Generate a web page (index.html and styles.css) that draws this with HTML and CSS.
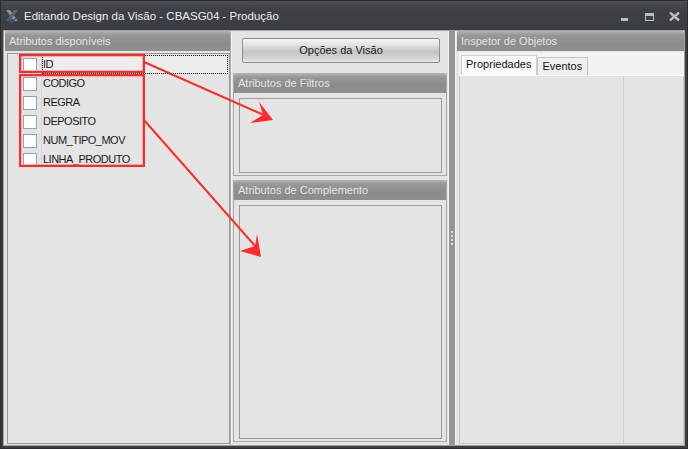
FILE: index.html
```html
<!DOCTYPE html>
<html lang="pt">
  <head>
    <meta charset="UTF-8" />
    <title>Editando Design da Visão</title>
    <link rel="stylesheet" href="styles.css">
  </head>
  <body>
    <div class="window">
      <div class="titlebar">
        <svg class="logo" width="16" height="16" viewBox="0 0 16 16">
          <path d="M2 2 L6 2 L14 13 L10 13 Z" fill="#8c939b"/>
          <path d="M14 2 L10 2 L2 13 L6 13 Z" fill="#5d6670"/>
          <path d="M3 10 L8 15 L13 10 L11 10 L8 13 L5 10 Z" fill="#3f5a78"/>
        </svg>
        <span class="title">Editando Design da Visão - CBASG04 - Produção</span>
        <div class="controls">
          <span class="ctl-min"></span>
          <span class="ctl-max"></span>
          <svg class="ctl-close" width="11" height="9" viewBox="0 0 11 9">
            <path d="M1 0.5 L10 8.5 M10 0.5 L1 8.5" stroke="#b9bec5" stroke-width="2.4"/>
          </svg>
        </div>
      </div>

      <div class="main">
        <div class="left">
          <div class="head">Atributos disponíveis</div>
          <div class="list">
            <div class="row active"><span class="chk-col"><span class="chk"></span></span><span class="lbl">ID</span></div>
            <div class="row"><span class="chk-col"><span class="chk"></span></span><span class="lbl">CODIGO</span></div>
            <div class="row"><span class="chk-col"><span class="chk"></span></span><span class="lbl">REGRA</span></div>
            <div class="row"><span class="chk-col"><span class="chk"></span></span><span class="lbl">DEPOSITO</span></div>
            <div class="row"><span class="chk-col"><span class="chk"></span></span><span class="lbl">NUM_TIPO_MOV</span></div>
            <div class="row"><span class="chk-col"><span class="chk"></span></span><span class="lbl">LINHA_PRODUTO</span></div>
          </div>
        </div>

        <div class="mid">
          <div class="btn">Opções da Visão</div>
          <div class="sec">
            <div class="head">Atributos de Filtros</div>
            <div class="sec-box short"></div>
          </div>
          <div class="sec grow">
            <div class="head">Atributos de Complemento</div>
            <div class="sec-box"></div>
          </div>
        </div>

        <div class="splitter">
          <span class="dot"></span><span class="dot"></span><span class="dot"></span><span class="dot"></span>
        </div>

        <div class="right">
          <div class="head">Inspetor de Objetos</div>
          <div class="tabs">
            <span class="tab on">Propriedades</span>
            <span class="tab">Eventos</span>
          </div>
          <div class="grid">
            <div class="grid-name"></div>
            <div class="grid-val"></div>
          </div>
        </div>
      </div>

      <!-- annotations drawn over the screenshot -->
      <div class="mark mark-1"></div>
      <div class="mark mark-2"></div>
      <svg class="arrows" width="688" height="449" viewBox="0 0 688 449">
        <path d="M144 62 L266 116" stroke="#ff2a2a" stroke-width="2" fill="none"/>
        <path d="M273 120 L259 102 L263 115 L250 123 Z" fill="#ff2a2a"/>
        <path d="M144 120 L256 247" stroke="#ff2a2a" stroke-width="2" fill="none"/>
        <path d="M261 257 L257 234 L255 246 L240 251 Z" fill="#ff2a2a"/>
      </svg>
    </div>
  </body>
</html>
```

FILE: styles.css
```css
* {
  box-sizing: border-box;
}
body {
  margin: 0;
  font-family: "Liberation Sans", Arial, sans-serif;
  font-size: 11px;
  background: #3b3e42;
}
.window {
  position: relative;
  width: 688px;
  height: 449px;
  border: 1px solid #2a2c2f;
  background: #3b3e42;
  display: flex;
  flex-direction: column;
}
.titlebar {
  height: 29px;
  flex: none;
  display: flex;
  align-items: center;
  background: linear-gradient(#4a4d52, #3e4145 30%, #3a3d41);
}
.logo {
  margin: 0 4px 0 3px;
}
.title {
  color: #eeeeee;
  font-size: 11.5px;
}
.controls {
  margin-left: auto;
  display: flex;
  align-items: center;
  margin-right: 7px;
  margin-top: 2px;
}
.ctl-min {
  width: 7px;
  height: 3px;
  margin-top: 6px;
  background: #b9bec5;
}
.ctl-max {
  width: 9px;
  height: 8px;
  margin-left: 17px;
  border: 1px solid #b9bec5;
  border-top-width: 3px;
}
.ctl-close {
  margin-left: 15px;
}
.main {
  flex: 1;
  display: flex;
  margin: 0 2px 2px 2px;
  background: #e4e4e4;
  border: 1px solid #a2a2a2;
}
.head {
  height: 20px;
  flex: none;
  line-height: 20px;
  padding-left: 4px;
  color: #e2e4e6;
  font-size: 11px;
  border-radius: 2px 2px 0 0;
  background: linear-gradient(#b4b4b4, #989898 20%, #8c8c8c 60%, #8e8e8e);
}
.left {
  width: 227px;
  display: flex;
  flex-direction: column;
  border-right: 1px solid #a8a8a8;
  padding: 0 0 1px 1px;
}
.list {
  flex: 1;
  margin: 2px 0 0 2px;
  border: 1px solid #9a9a9a;
  padding-top: 1px;
}
.row {
  height: 19px;
  display: flex;
  align-items: center;
}
.chk-col {
  width: 34px;
  height: 19px;
  display: flex;
  align-items: center;
  border-right: 1px solid #d6d6d6;
}
.chk {
  width: 14px;
  height: 14px;
  margin-left: 15px;
  background: #fff;
  border: 1px solid #8ea2b8;
}
.lbl {
  padding-left: 1px;
  color: #1a1a1a;
  letter-spacing: -0.5px;
  line-height: 17px;
}
.row.active .lbl {
  flex: 1;
  height: 19px;
  background: #ececec;
  border: 1px dotted #000;
  margin-right: 1px;
  padding-left: 0;
}
.mid {
  width: 217px;
  display: flex;
  flex-direction: column;
  padding: 7px 1px 3px 1px;
  border-left: 1px solid #f4f4f4;
}
.btn {
  flex: none;
  margin: 0 7px 0 9px;
  height: 25px;
  line-height: 23px;
  text-align: center;
  color: #1a1a1a;
  border: 1px solid #8e8e8e;
  border-radius: 2px;
  background: linear-gradient(#f6f6f6, #e4e4e4 25%, #c4c4c4 55%, #d4d4d4 85%, #e8e8e8);
}
.sec {
  margin-top: 10px;
  border: 1px solid #a8a8a8;
  border-top: none;
  display: flex;
  flex-direction: column;
}
.sec + .sec {
  margin-top: 4px;
}
.sec.grow {
  flex: 1;
}
.sec-box {
  flex: 1;
  margin: 5px 4px 2px 5px;
  border: 1px solid #9a9a9a;
}
.sec-box.short {
  flex: none;
  height: 75px;
}
.splitter {
  width: 8px;
  border-left: 1px solid #f4f4f4;
  border-right: 1px solid #f4f4f4;
  background: #959595;
  display: flex;
  flex-direction: column;
  align-items: center;
  justify-content: center;
  gap: 2px;
}
.dot {
  width: 2px;
  height: 2px;
  background: #dcdcdc;
}
.right {
  flex: 1;
  display: flex;
  flex-direction: column;
  padding: 0 0 1px 1px;
}
.tabs {
  height: 24px;
  flex: none;
  display: flex;
  align-items: flex-end;
  margin: 1px 0 0 2px;
  padding-left: 2px;
  background: #f2f2f2;
  border-bottom: 1px solid #fdfdfd;
}
.tab {
  height: 18px;
  line-height: 17px;
  padding: 0 5px 0 4px;
  color: #111;
  background: #f0f0f0;
  border: 1px solid #c4c4c4;
  border-bottom: none;
}
.tab.on {
  height: 20px;
  line-height: 17px;
  background: #fafafa;
  border-color: #d0d0d0;
}
.grid {
  flex: 1;
  display: flex;
  margin-left: 2px;
  border: 1px solid #c6c6c6;
  border-top: none;
}
.grid-name {
  width: 164px;
  border-right: 1px solid #c9d1db;
}
.mark {
  position: absolute;
  border: 2px solid #ff2a2a;
  box-shadow: inset 0 0 0 1px rgba(255, 120, 120, 0.5);
}
.mark-1 {
  left: 18px;
  top: 53px;
  width: 126px;
  height: 19px;
}
.mark-2 {
  left: 18px;
  top: 73px;
  width: 126px;
  height: 93px;
}
.arrows {
  position: absolute;
  left: -1px;
  top: -1px;
}
```
